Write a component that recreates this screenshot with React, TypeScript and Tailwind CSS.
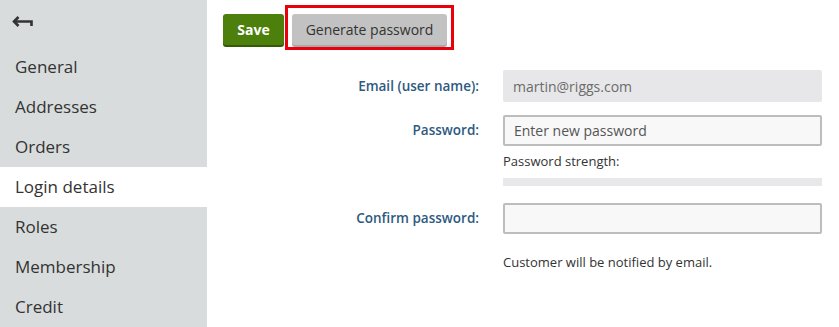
import React from 'react'

const font = { fontFamily: '"Segoe UI", "Open Sans", "Noto Sans", sans-serif' }

const navItems = ['General', 'Addresses', 'Orders', 'Login details', 'Roles', 'Membership', 'Credit']

function BackArrow() {
  return (
    <svg width="22" height="14" viewBox="0 0 22 14" fill="none" stroke="#333" strokeWidth="2.6">
      <path d="M6.5 2 L2 6.5 L6.5 11" strokeLinejoin="miter" />
      <path d="M2 6.5 H19.5 V11" />
    </svg>
  )
}

export default function App() {
  return (
    <div className="flex w-[839px] h-[327px] bg-white overflow-hidden" style={font}>
      {/* Sidebar */}
      <aside className="w-[207px] h-full bg-[#d9dcdc] shrink-0">
        <div className="h-[47px] pl-[12px] pt-[15px]">
          <BackArrow />
        </div>
        <nav>
          {navItems.map((item) => (
            <div
              key={item}
              className={`h-[40px] flex items-center pl-[15px] text-[17px] text-[#333] ${
                item === 'Login details' ? 'bg-white' : ''
              }`}
            >
              {item}
            </div>
          ))}
        </nav>
      </aside>

      {/* Main */}
      <main className="flex-1 pl-[16px] pr-[17px] pt-[14px]">
        <div className="flex items-start h-[31px]">
          <button className="h-[31px] w-[61px] rounded-[3px] bg-[#4c7f0b] text-white font-bold text-[14px] shadow-[0_2px_0_#355a06]">
            Save
          </button>
          <div className="ml-[1px] -mt-[9px] border-[3px] border-[#e8000b] pt-[6px] pb-[2px] px-[4px]">
            <button className="h-[31px] w-[155px] rounded-[3px] bg-[#c2c2c2] text-[#333] text-[14px] shadow-[0_2px_0_#a9a9a9]">
              Generate password
            </button>
          </div>
        </div>

        <div className="grid grid-cols-[256px_1fr] gap-x-[24px] mt-[25px] text-[14px]">
          <div className="h-[32px] flex items-center justify-end font-semibold text-[13.5px] text-[#2e5a80]">
            Email (user name):
          </div>
          <div className="h-[32px] flex items-center px-[10px] bg-[#e7e7e9] rounded-[2px] text-[#6b6b6b]">
            martin@riggs.com
          </div>

          <div className="h-[31px] mt-[13px] flex items-center justify-end font-semibold text-[13.5px] text-[#2e5a80]">
            Password:
          </div>
          <div className="mt-[13px]">
            <div className="h-[31px] flex items-center px-[9px] bg-[#f8f8f9] border-2 border-[#bdbdbd] rounded-[2px] text-[#555]">
              Enter new password
            </div>
            <div className="mt-[6px] h-[20px] flex items-center text-[13px] text-[#333]">Password strength:</div>
            <div className="mt-[6px] h-[8px] bg-[#e8e8ea]" />
          </div>

          <div className="h-[31px] mt-[17px] flex items-center justify-end font-semibold text-[13.5px] text-[#2e5a80]">
            Confirm password:
          </div>
          <div className="mt-[17px]">
            <div className="h-[31px] bg-[#f8f8f9] border-2 border-[#bdbdbd] rounded-[2px]" />
            <div className="mt-[19px] h-[20px] flex items-center text-[13px] text-[#333]">
              Customer will be notified by email.
            </div>
          </div>
        </div>
      </main>
    </div>
  )
}
